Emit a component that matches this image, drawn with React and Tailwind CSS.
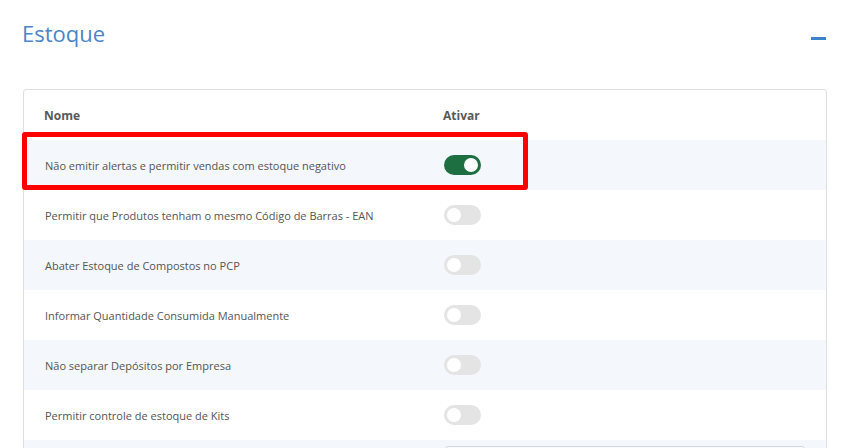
import React from "react";

const rows = [
  { label: "Não emitir alertas e permitir vendas com estoque negativo", on: true },
  { label: "Permitir que Produtos tenham o mesmo Código de Barras - EAN", on: false },
  { label: "Abater Estoque de Compostos no PCP", on: false },
  { label: "Informar Quantidade Consumida Manualmente", on: false },
  { label: "Não separar Depósitos por Empresa", on: false },
  { label: "Permitir controle de estoque de Kits", on: false },
];

function Toggle({ on }) {
  return (
    <div
      className={
        "w-[37px] h-[20px] rounded-full flex items-center px-[3px] " +
        (on ? "bg-[#1d6e41] justify-end" : "bg-[#e4e4e4] justify-start")
      }
    >
      <div className="w-[14px] h-[14px] rounded-full bg-white" />
    </div>
  );
}

export default function App() {
  return (
    <div
      className="w-[841px] h-[448px] overflow-hidden bg-white"
      style={{ fontFamily: '"Open Sans", sans-serif' }}
    >
      <div className="flex items-start justify-between pl-[22px] pr-[15px] pt-[17px] h-[89px]">
        <h2 className="text-[22px] font-normal text-[#4a86c8] leading-[32px]">Estoque</h2>
        <div className="mt-[20px] w-[15px] h-[3px] bg-[#3d82cc]" />
      </div>
      <div className="ml-[23px] w-[804px] border border-[#dcdfe3] rounded-t-[3px]">
        <div className="flex items-center h-[50px] pt-[2px] text-[12px] font-bold text-[#595959]">
          <div className="pl-[20px] w-[419px]">Nome</div>
          <div>Ativar</div>
        </div>
        {rows.map((r, i) => (
          <div
            key={i}
            className={
              "relative flex items-center h-[50px] text-[11px] text-[#555555] " +
              (i % 2 === 0 ? "bg-[#f4f7fb]" : "bg-white")
            }
          >
            <div className="pl-[21px] w-[420px] pt-[3px]">{r.label}</div>
            <Toggle on={r.on} />
            {i === 0 && (
              <div className="absolute left-[-2px] top-[-8px] w-[506px] h-[58px] border-[5px] border-[#ff0000] rounded-[3px]" />
            )}
          </div>
        ))}
        <div className="flex h-[30px] bg-[#f4f7fb] pt-[6px]">
          <div className="w-[421px]" />
          <div className="w-[360px] h-[30px] border border-[#d5d8dc] rounded-[3px] bg-[#fafbfc]" />
        </div>
      </div>
    </div>
  );
}
